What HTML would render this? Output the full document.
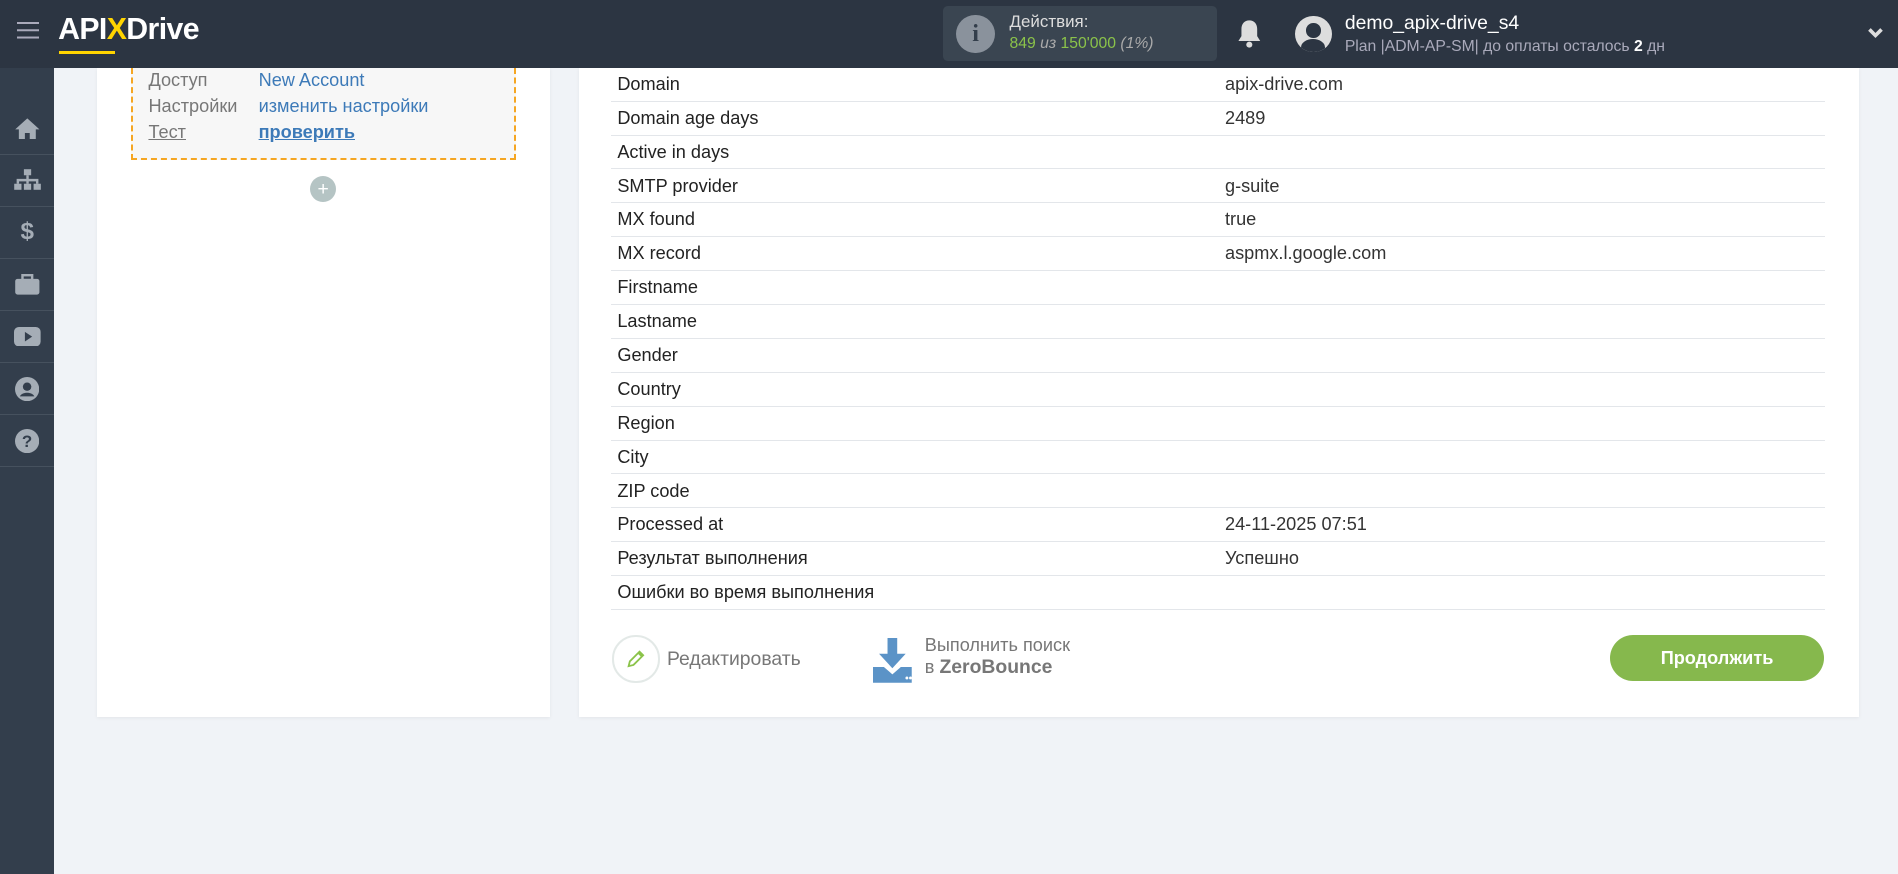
<!DOCTYPE html>
<html><head><meta charset="utf-8"><style>
*{margin:0;padding:0;box-sizing:border-box}
html,body{width:1898px;height:874px;overflow:hidden;background:#f0f3f7}
#w{zoom:1.21046;width:1568px;height:722px;position:relative;font-family:"Liberation Sans",sans-serif;}
.hdr{position:absolute;left:0;top:0;width:1568px;height:56px;background:#2c3542;z-index:5}
.sb{position:absolute;left:0;top:56px;width:45px;height:666px;background:#333e4c}
.sbi{position:absolute;left:0;width:45px;height:43px;border-bottom:1px solid #46515e;display:flex;align-items:center;justify-content:center}
.card{position:absolute;background:#fff;box-shadow:0 1px 3px rgba(0,0,0,.06)}
.row{position:absolute;left:505px;width:1003px;height:28px;border-bottom:1px solid #e3e6ea;font-size:15px;color:#222}
.row span{position:absolute;top:5px}
.row .a{left:5px}.row .b{left:507px;color:#333}
</style></head><body><div id="w">
<div class="hdr">
 <div style="position:absolute;left:14px;top:18px;width:18px;height:2px;background:#aab;box-shadow:0 6px 0 #aab,0 12px 0 #aab"></div>
 <div style="position:absolute;left:48px;top:11px;font-size:25px;font-weight:bold;color:#fff;letter-spacing:-0.5px">API<span style="color:#ffd400">X</span>Drive</div>
 <div style="position:absolute;left:49px;top:42px;width:46px;height:3px;background:#ffd400"></div>
 <div style="position:absolute;left:779px;top:5px;width:226px;height:45px;background:#3a4551;border-radius:4px">
  <div style="position:absolute;left:11px;top:7px;width:32px;height:32px;border-radius:50%;background:#8a929c;color:#333e4b;font:bold 20px 'Liberation Serif',serif;text-align:center;line-height:32px">i</div>
  <div style="position:absolute;left:55px;top:5px;font-size:14px;color:#ddd">Действия:</div>
  <div style="position:absolute;left:55px;top:24px;font-size:13px;color:#8bc34a">849 <i style="color:#aaa">из</i> 150'000 <i style="color:#aaa">(1%)</i></div>
 </div>
 <svg style="position:absolute;left:1021px;top:15px" width="22" height="26" viewBox="0 0 22 26"><path d="M11 2c-4 0-6.5 3-6.5 7v6L2 19h18l-2.5-4V9c0-4-2.5-7-6.5-7z" fill="#ddd"/><circle cx="11" cy="22" r="2.5" fill="#ddd"/></svg>
 <div style="position:absolute;left:1070px;top:13px;width:30px;height:30px;border-radius:50%;background:#ddd;overflow:hidden"><div style="position:absolute;left:9px;top:6px;width:12px;height:12px;border-radius:50%;background:#2c3542"></div><div style="position:absolute;left:5px;top:19px;width:20px;height:14px;border-radius:50%;background:#2c3542"></div></div>
 <div style="position:absolute;left:1111px;top:10px;font-size:16px;color:#fff">demo_apix-drive_s4</div>
 <div style="position:absolute;left:1111px;top:31px;font-size:13px;color:#aab">Plan |ADM-AP-SM| до оплаты осталось <b style="color:#fff">2</b> дн</div>
 <svg style="position:absolute;left:1542px;top:22px" width="14" height="10"><path d="M2 2l5 5 5-5" stroke="#ddd" stroke-width="3" fill="none"/></svg>
</div>
<div class="sb">
 <div class="sbi" style="top:29px"><svg width="22" height="20"><path d="M11 2L1 11h3v8h5v-5h4v5h5v-8h3z" fill="#a5adb6"/></svg></div>
 <div class="sbi" style="top:72px"><svg width="24" height="20"><rect x="9" y="1" width="6" height="5" fill="#a5adb6"/><rect x="1" y="13" width="6" height="5" fill="#a5adb6"/><rect x="9" y="13" width="6" height="5" fill="#a5adb6"/><rect x="17" y="13" width="6" height="5" fill="#a5adb6"/><path d="M12 6v4M4 13v-3h16v3M12 10v3" stroke="#a5adb6" stroke-width="2" fill="none"/></svg></div>
 <div class="sbi" style="top:115px;color:#a5adb6;font-weight:bold;font-size:20px">$</div>
 <div class="sbi" style="top:158px"><svg width="22" height="18"><rect x="1" y="4" width="20" height="13" rx="2" fill="#a5adb6"/><rect x="7" y="1" width="8" height="4" fill="none" stroke="#a5adb6" stroke-width="2"/></svg></div>
 <div class="sbi" style="top:201px"><svg width="22" height="16"><rect x="0" y="0" width="22" height="16" rx="4" fill="#a5adb6"/><path d="M9 4v8l6-4z" fill="#333e4c"/></svg></div>
 <div class="sbi" style="top:244px"><svg width="20" height="20"><circle cx="10" cy="10" r="10" fill="#a5adb6"/><circle cx="10" cy="8" r="3.5" fill="#333e4c"/><path d="M4 16c2-4 10-4 12 0" fill="#333e4c"/></svg></div>
 <div class="sbi" style="top:287px"><svg width="20" height="20"><circle cx="10" cy="10" r="10" fill="#a5adb6"/><text x="10" y="15" text-anchor="middle" font-size="14" font-weight="bold" fill="#333e4c" font-family="Liberation Sans">?</text></svg></div>
</div>
<div class="card" style="left:80px;top:56px;width:374px;height:536px">
 <div style="position:absolute;left:28px;top:0;width:318px;height:76px;background:#f7f7f7;border:2px dashed #f5a623;border-top:none;font-size:15px">
  <div style="position:absolute;left:13px;top:2px;color:#777">Доступ</div><div style="position:absolute;left:104px;top:2px;color:#3d7ab8">New Account</div>
  <div style="position:absolute;left:13px;top:23px;color:#777">Настройки</div><div style="position:absolute;left:104px;top:23px;color:#3d7ab8">изменить настройки</div>
  <div style="position:absolute;left:13px;top:45px;color:#777;text-decoration:underline">Тест</div><div style="position:absolute;left:104px;top:45px;color:#3d7ab8;font-weight:bold;text-decoration:underline">проверить</div>
 </div>
 <div style="position:absolute;left:176px;top:89px;width:22px;height:22px;border-radius:50%;background:#b5c4c4;color:#fff;text-align:center;line-height:22px;font-size:16px">+</div>
</div>
<div class="card" style="left:478px;top:56px;width:1058px;height:536px"></div>
<div class="row" style="top:56px"><span class="a">Domain</span><span class="b">apix-drive.com</span></div>
<div class="row" style="top:84px"><span class="a">Domain age days</span><span class="b">2489</span></div>
<div class="row" style="top:112px"><span class="a">Active in days</span></div>
<div class="row" style="top:140px"><span class="a">SMTP provider</span><span class="b">g-suite</span></div>
<div class="row" style="top:168px"><span class="a">MX found</span><span class="b">true</span></div>
<div class="row" style="top:196px"><span class="a">MX record</span><span class="b">aspmx.l.google.com</span></div>
<div class="row" style="top:224px"><span class="a">Firstname</span></div>
<div class="row" style="top:252px"><span class="a">Lastname</span></div>
<div class="row" style="top:280px"><span class="a">Gender</span></div>
<div class="row" style="top:308px"><span class="a">Country</span></div>
<div class="row" style="top:336px"><span class="a">Region</span></div>
<div class="row" style="top:364px"><span class="a">City</span></div>
<div class="row" style="top:392px"><span class="a">ZIP code</span></div>
<div class="row" style="top:420px"><span class="a">Processed at</span><span class="b">24-11-2025 07:51</span></div>
<div class="row" style="top:448px"><span class="a">Результат выполнения</span><span class="b">Успешно</span></div>
<div class="row" style="top:476px"><span class="a">Ошибки во время выполнения</span></div>
<div style="position:absolute;left:506px;top:525px;width:39px;height:39px;border-radius:50%;border:2px solid #e3e9e7"><svg style="position:absolute;left:9px;top:9px" width="18" height="18"><path d="M3 15l1-4 8-8 3 3-8 8z M11 4l3 3" stroke="#8bc34a" stroke-width="1.5" fill="none"/></svg></div>
<div style="position:absolute;left:551px;top:535px;font-size:16px;color:#777">Редактировать</div>
<svg style="position:absolute;left:721px;top:527px" width="38" height="38"><rect x="12" y="0" width="8" height="14" fill="#5b93c7"/><path d="M5 13h22L16 25z" fill="#5b93c7"/><path d="M0 24h9l7 6 7-6h9v13H0z" fill="#5b93c7"/><circle cx="28" cy="33" r="1.2" fill="#fff"/><circle cx="31" cy="33" r="1.2" fill="#fff"/></svg>
<div style="position:absolute;left:764px;top:525px;font-size:15px;color:#777;line-height:18px">Выполнить поиск<br>в <b style="font-size:16px">ZeroBounce</b></div>
<div style="position:absolute;left:1330px;top:525px;width:177px;height:38px;border-radius:19px;background:#86b84d;color:#fff;font-size:15px;font-weight:bold;text-align:center;line-height:38px">Продолжить</div>
</div></body></html>
